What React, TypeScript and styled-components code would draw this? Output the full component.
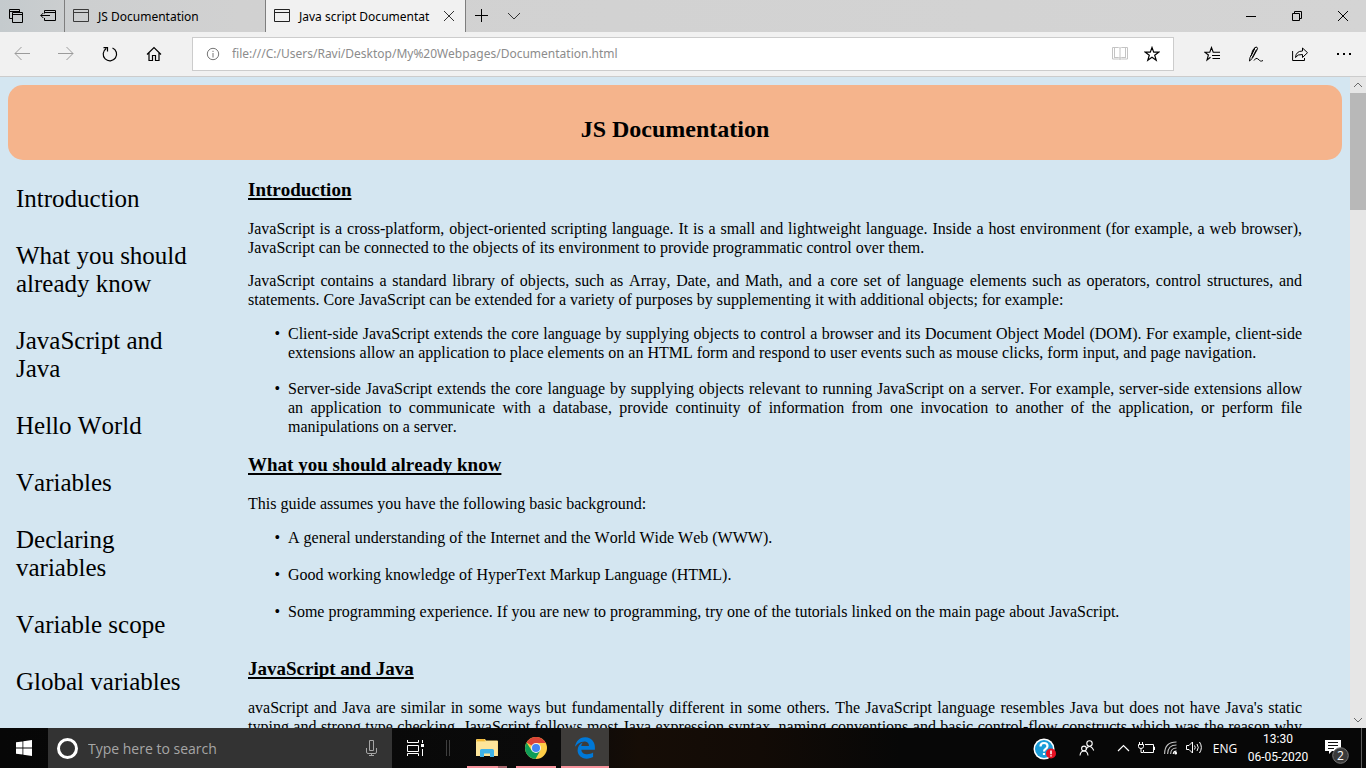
import React from "react";
import styled, { createGlobalStyle } from "styled-components";
import { FaEdgeLegacy } from "react-icons/fa";

const GlobalStyle = createGlobalStyle`
  * { box-sizing: border-box; }
  body { margin: 0; }
  button, input { font: inherit; color: inherit; border: 0; padding: 0; background: none; outline: none; }
  svg { display: block; flex: none; }
`;

const chromeFont = `"Noto Sans", "Open Sans", sans-serif`;
const taskbarFont = `"Open Sans", "Noto Sans", sans-serif`;
const serif = `"Liberation Serif", "Times New Roman", serif`;

const Desktop = styled.div`
  display: flex;
  flex-direction: column;
  height: 100vh;
  overflow: hidden;
  font-family: ${chromeFont};
  font-size: 12px;
  color: #000;
`;

/* Browser chrome */

const TitleBar = styled.header`
  display: flex;
  flex: none;
  height: 32px;
  background: linear-gradient(90deg, #c4cacd 0, #cdcfd0 80px, #d1d1d1 240px, #d4d4d4 100%);
`;

const TitleButton = styled.button<{ $width?: number }>`
  display: flex;
  align-items: center;
  justify-content: center;
  width: ${(p) => p.$width ?? 32}px;
`;

const Tab = styled.div<{ $active?: boolean }>`
  display: flex;
  align-items: center;
  width: 201px;
  padding-left: 8px;
  border-left: 1px solid #7e7e7e;
  border-right: ${(p) => (p.$active ? "1px solid #7e7e7e" : "0")};
  background: ${(p) => (p.$active ? "#f1f1f1" : "transparent")};
`;

const TabLabel = styled.button`
  flex: 1;
  min-width: 0;
  margin-left: 9px;
  white-space: nowrap;
  text-align: left;
`;

const Spacer = styled.div`
  flex: 1;
`;

const Toolbar = styled.nav`
  display: flex;
  align-items: center;
  flex: none;
  height: 45px;
  padding-bottom: 1px;
  border-bottom: 1px solid #ccc;
  background: #f1f1f1;
`;

const ToolButton = styled.button`
  display: flex;
  align-items: center;
  justify-content: center;
  width: 44px;
  height: 32px;
`;

const AddressBar = styled.div`
  display: flex;
  align-items: center;
  flex: 1;
  height: 34px;
  margin: 0 16px;
  padding-left: 13px;
  padding-right: 5px;
  border: 1px solid #ccc;
  background: #fff;
`;

const AddressInput = styled.input`
  flex: 1;
  min-width: 0;
  margin-left: 12px;
  color: #8c8c8c;
`;

const AddressButton = styled.button`
  display: flex;
  align-items: center;
  justify-content: center;
  width: 32px;
  height: 32px;
`;

/* Web page */

const Viewport = styled.div`
  display: flex;
  flex: 1;
  min-height: 0;
  background: #d4e6f1;
`;

const Page = styled.div`
  flex: 1;
  min-width: 0;
  overflow: hidden;
  padding: 8px 8px 0;
  font-family: ${serif};
  font-size: 16px;
  font-kerning: none;
`;

const Banner = styled.div`
  padding: 30px 0 17px;
  border-radius: 15px;
  background: #f5b48c;
  text-align: center;
`;

const BannerTitle = styled.h1`
  margin: 0;
  font-size: 24px;
  line-height: 28px;
`;

const Columns = styled.div`
  display: flex;
`;

const Sidebar = styled.nav`
  display: flex;
  flex-direction: column;
  flex: none;
  gap: 29px;
  width: 190px;
  margin-right: 50px;
  padding: 25px 0 0 8px;
`;

const SideLink = styled.a`
  font-size: 25px;
  line-height: 28px;
  color: #000;
  text-decoration: none;
`;

const Article = styled.main`
  flex: 1;
  min-width: 0;
  padding: 19px 40px 0 0;
  line-height: 19px;
  text-align: justify;
`;

const Section = styled.section<{ $gap: number }>`
  margin-bottom: ${(p) => p.$gap}px;
`;

const Heading = styled.h2`
  margin: 0 0 18px;
  font-size: 19px;
  line-height: 22px;
  text-align: left;
  text-decoration: underline;
  text-decoration-thickness: 2px;
  text-underline-offset: 2px;
  text-decoration-skip-ink: none;
`;

const Paragraph = styled.p<{ $fill?: boolean }>`
  margin: 0 0 14px;
  text-align-last: ${(p) => (p.$fill ? "justify" : "auto")};
`;

const List = styled.ul<{ $gap: number }>`
  display: flex;
  flex-direction: column;
  gap: ${(p) => p.$gap}px;
  margin: 15px 0 0;
  padding-left: 40px;
  list-style-type: "•\\00a0\\00a0";
`;

const ScrollBar = styled.div`
  display: flex;
  flex-direction: column;
  flex: none;
  width: 16px;
  background: #e6e6e6;
`;

const ScrollButton = styled.button`
  display: flex;
  align-items: center;
  justify-content: center;
  height: 16px;
`;

const ScrollThumb = styled.div`
  height: 117px;
  background: #b8b8b8;
`;

/* Taskbar */

const Taskbar = styled.footer`
  display: flex;
  flex: none;
  height: 40px;
  background: linear-gradient(90deg, #070707 0, #0a0a0a 560px, #160d06 640px, #120b06 760px, #070707 900px);
  font-family: ${taskbarFont};
  color: #fff;
`;

const TaskButton = styled.button<{ $width?: number }>`
  display: flex;
  align-items: center;
  justify-content: center;
  width: ${(p) => p.$width ?? 48}px;
  white-space: nowrap;
`;

const SearchBox = styled.label`
  display: flex;
  align-items: center;
  width: 344px;
  padding: 0 14px 0 8px;
  background: #333;
`;

const SearchInput = styled.input`
  flex: 1;
  min-width: 0;
  margin-left: 9px;
  font-size: 14px;
  &::placeholder { color: #a6a6a6; opacity: 1; }
`;

const Divider = styled.div`
  align-self: center;
  width: 4px;
  height: 16px;
  margin: 0 13px 0 6px;
  border: solid #3f3f3f;
  border-width: 0 1px;
`;

const AppRow = styled.div`
  display: flex;
  gap: 1px;
`;

const AppButton = styled.button<{ $active?: boolean; $split?: boolean }>`
  display: flex;
  flex-direction: column;
  align-items: center;
  justify-content: space-between;
  width: 48px;
  padding-top: 9px;
  background: ${(p) => (p.$active ? "#3e3c3a" : "transparent")};
  &::after {
    content: "";
    width: ${(p) => (p.$active ? 48 : 40)}px;
    height: 2px;
    background: ${(p) =>
      p.$split ? "linear-gradient(90deg, #f7939c 31px, #a8676d 31px)" : "#f7939c"};
  }
`;

const Clock = styled.time`
  display: flex;
  flex-direction: column;
  justify-content: center;
  width: 70px;
  padding-bottom: 1px;
  font-family: Roboto, ${taskbarFont};
  line-height: 18px;
  text-align: center;
`;

const DesktopEdge = styled.button`
  width: 5px;
  border-left: 1px solid #5c5c5c;
`;

type IconProps = {
  w: number;
  h: number;
  color?: string;
  sw?: number;
  crisp?: boolean;
  children: React.ReactNode;
};

const Icon = ({ w, h, color = "#000", sw = 1, crisp, children }: IconProps) => (
  <svg
    width={w}
    height={h}
    viewBox={`0 0 ${w} ${h}`}
    fill="none"
    stroke={color}
    strokeWidth={sw}
    shapeRendering={crisp ? "crispEdges" : undefined}
    aria-hidden="true"
  >
    {children}
  </svg>
);

const WindowIcon = ({ color }: { color: string }) => (
  <Icon w={16} h={14} color={color}>
    <path d="M.5 .5h15v12H.5zM.5 3.5h15" />
  </Icon>
);

const topics = [
  "Introduction",
  "What you should already know",
  "JavaScript and Java",
  "Hello World",
  "Variables",
  "Declaring variables",
  "Variable scope",
  "Global variables",
];

const slug = (topic: string) => "#" + topic.replace(/ /g, "_");

export default function App() {
  return (
    <Desktop>
      <GlobalStyle />
      <TitleBar>
        <TitleButton aria-label="Tabs you've set aside">
          <Icon w={14} h={14}>
            <path d="M3 9.500H.5V.5h10V3M.5 2.500h10M3.500 3.500h10v10h-10zM3.500 5.500h10" />
          </Icon>
        </TitleButton>
        <TitleButton aria-label="Set these tabs aside">
          <Icon w={16} h={12}>
            <path d="M4.500 3.500V.5h11v10h-11V8M4.500 2.500h11M.8 5.500H10M3.300 3L.8 5.500 3.300 8" />
          </Icon>
        </TitleButton>
        <Tab>
          <WindowIcon color="#3a3a3a" />
          <TabLabel>JS Documentation</TabLabel>
        </Tab>
        <Tab $active>
          <WindowIcon color="#222" />
          <TabLabel>Java script Documentat</TabLabel>
          <TitleButton aria-label="Close tab">
            <Icon w={12} h={12} color="#333">
              <path d="M1 1l10 10M11 1L1 11" />
            </Icon>
          </TitleButton>
        </Tab>
        <TitleButton aria-label="New tab">
          <Icon w={14} h={14}>
            <path d="M6.500 0v13M0 6.500h13" />
          </Icon>
        </TitleButton>
        <TitleButton aria-label="Show tab previews">
          <Icon w={14} h={8} color="#333">
            <path d="M1 1l6 6 6-6" />
          </Icon>
        </TitleButton>
        <Spacer />
        <TitleButton $width={46} aria-label="Minimize">
          <Icon w={10} h={2}>
            <path d="M0 1.500h10" />
          </Icon>
        </TitleButton>
        <TitleButton $width={46} aria-label="Restore">
          <Icon w={10} h={10}>
            <path d="M.5 2.500h7v7h-7zM2.500 2.500v-2h7v7h-2" />
          </Icon>
        </TitleButton>
        <TitleButton $width={46} aria-label="Close">
          <Icon w={10} h={10}>
            <path d="M0 0l10 10M10 0L0 10" />
          </Icon>
        </TitleButton>
      </TitleBar>

      <Toolbar>
        <ToolButton aria-label="Back">
          <Icon w={16} h={14} color="#9b9b9b">
            <path d="M1 6.500h15M7.500 0L1 6.500 7.500 13" />
          </Icon>
        </ToolButton>
        <ToolButton aria-label="Forward">
          <Icon w={16} h={14} color="#9b9b9b">
            <path d="M0 6.500h15M8.500 0L15 6.500 8.500 13" />
          </Icon>
        </ToolButton>
        <ToolButton aria-label="Refresh">
          <Icon w={16} h={16} sw={1.2}>
            <path d="M10.500 2A6.700 6.700 0 1 1 4.200 2.600M1.500 1.600h4v4" />
          </Icon>
        </ToolButton>
        <ToolButton aria-label="Home">
          <Icon w={16} h={16} sw={1.2}>
            <path d="M1 8.500L8 1.500l7 7M3 7v7.500h3.500V9.500h3v5H13V7" />
          </Icon>
        </ToolButton>
        <AddressBar>
          <Icon w={14} h={14} color="#767676">
            <circle cx="7" cy="7" r="5.700" />
            <path d="M7 6v4.500M7 3.800v1.200" />
          </Icon>
          <AddressInput
            aria-label="Address"
            defaultValue="file:///C:/Users/Ravi/Desktop/My%20Webpages/Documentation.html"
          />
          <AddressButton aria-label="Reading view">
            <Icon w={16} h={15} color="#c4c4c4">
              <path d="M.5 1.500h6q1 0 1.500.7.500-.7 1.500-.7h6v11.500h-6q-1 0-1.500.8-.5-.8-1.500-.8h-6zM2.500 1v10.500M13.500 1v10.500M8 2v11.500M2 11.500h4.500q1 0 1.500.7.500-.7 1.500-.7H14" />
            </Icon>
          </AddressButton>
          <AddressButton aria-label="Add to favorites">
            <Icon w={16} h={16} sw={1.2}>
              <path d="M8 1.500l1.700 4.700h5L10.700 9.200l1.500 5L8 11.200l-4.200 3 1.500-5L1.300 6.200h5z" />
            </Icon>
          </AddressButton>
        </AddressBar>
        <ToolButton aria-label="Hub">
          <Icon w={16} h={16} sw={1.1}>
            <path d="M6.500 11.300L3 14l1.400-5L.8 6.200h5L7.500 1.500l1.700 4.700H16M8 9.500h8M8.500 12.500H16" />
          </Icon>
        </ToolButton>
        <ToolButton aria-label="Add notes">
          <Icon w={16} h={16}>
            <path d="M1.500 15L2 11.500 6.800 2Q8 .5 9 1.300t.2 2.300L4.200 12.500 1.500 15M3.800 8L4.500 4.500 7.500 1M6.500 3L3 10M8.500 3.500L4 12M6 14.500q2-3.500 3.800-1.700t2.700 2.200 2.500-.5" />
          </Icon>
        </ToolButton>
        <ToolButton aria-label="Share">
          <Icon w={16} h={14}>
            <path d="M.6 4v9.500h11.900V11M3.500 10.500Q4 4 10.500 4V1l5 4.700-5 4.800V7.500Q5.500 7 3.500 10.500z" />
          </Icon>
        </ToolButton>
        <ToolButton aria-label="Settings and more">
          <Icon w={14} h={2} crisp>
            <path d="M0 1h2M6 1h2M12 1h2" strokeWidth="2" />
          </Icon>
        </ToolButton>
      </Toolbar>

      <Viewport>
        <Page>
          <Banner>
            <BannerTitle>JS Documentation</BannerTitle>
          </Banner>
          <Columns>
            <Sidebar>
              {topics.map((topic) => (
                <SideLink key={topic} href={slug(topic)}>
                  {topic}
                </SideLink>
              ))}
            </Sidebar>
            <Article>
              <Section $gap={18} id="Introduction">
                <Heading>Introduction</Heading>
                <Paragraph>
                  JavaScript is a cross-platform, object-oriented scripting language. It is a small
                  and lightweight language. Inside a host environment (for example, a web browser),
                  JavaScript can be connected to the objects of its environment to provide
                  programmatic control over them.
                </Paragraph>
                <Paragraph>
                  JavaScript contains a standard library of objects, such as Array, Date, and Math,
                  and a core set of language elements such as operators, control structures, and
                  statements. Core JavaScript can be extended for a variety of purposes by
                  supplementing it with additional objects; for example:
                </Paragraph>
                <List $gap={17}>
                  <li>
                    Client-side JavaScript extends the core language by supplying objects to control
                    a browser and its Document Object Model (DOM). For example, client-side
                    extensions allow an application to place elements on an HTML form and respond to
                    user events such as mouse clicks, form input, and page navigation.
                  </li>
                  <li>
                    Server-side JavaScript extends the core language by supplying objects relevant to
                    running JavaScript on a server. For example, server-side extensions allow an
                    application to communicate with a database, provide continuity of information
                    from one invocation to another of the application, or perform file manipulations
                    on a server.
                  </li>
                </List>
              </Section>
              <Section $gap={37} id="What_you_should_already_know">
                <Heading>What you should already know</Heading>
                <Paragraph>This guide assumes you have the following basic background:</Paragraph>
                <List $gap={18}>
                  <li>A general understanding of the Internet and the World Wide Web (WWW).</li>
                  <li>Good working knowledge of HyperText Markup Language (HTML).</li>
                  <li>
                    Some programming experience. If you are new to programming, try one of the
                    tutorials linked on the main page about JavaScript.
                  </li>
                </List>
              </Section>
              <Section $gap={18} id="JavaScript_and_Java">
                <Heading>JavaScript and Java</Heading>
                <Paragraph $fill>
                  avaScript and Java are similar in some ways but fundamentally different in some
                  others. The JavaScript language resembles Java but does not have Java's static
                  typing and strong type checking. JavaScript follows most Java expression syntax,
                  naming conventions and basic control-flow constructs which was the reason why
                </Paragraph>
              </Section>
            </Article>
          </Columns>
        </Page>
        <ScrollBar>
          <ScrollButton aria-label="Scroll up">
            <Icon w={10} h={6} color="#6a6a6a">
              <path d="M1 5l4-4 4 4" />
            </Icon>
          </ScrollButton>
          <ScrollThumb />
          <Spacer />
          <ScrollButton aria-label="Scroll down">
            <Icon w={10} h={6} color="#6a6a6a">
              <path d="M1 1l4 4 4-4" />
            </Icon>
          </ScrollButton>
        </ScrollBar>
      </Viewport>

      <Taskbar>
        <TaskButton aria-label="Start">
          <svg width="16" height="16" viewBox="0 0 16 16" fill="#fff" aria-hidden="true">
            <path d="M0 2.300L6.500 1.400v6.200H0zM7.300 1.300L16 0v7.600H7.300zM0 8.400h6.500v6.200L0 13.700zM7.300 8.400H16V16l-8.700-1.300z" />
          </svg>
        </TaskButton>
        <SearchBox>
          <Icon w={23} h={23} color="#fff" sw={3}>
            <circle cx="11.500" cy="11.500" r="9" />
          </Icon>
          <SearchInput type="text" placeholder="Type here to search" aria-label="Search" />
          <Icon w={13} h={16} color="#a6a6a6">
            <path d="M4.500.5h4v10h-4zM1.500 8v4q0 1.500 1.500 1.500h7q1.500 0 1.500-1.500V8M6.500 13.500v2M4 15.500h5" />
          </Icon>
        </SearchBox>
        <TaskButton aria-label="Task view">
          <Icon w={18} h={16} color="#fff">
            <path d="M.5 0v2.500h11V0M.5 5.500h11v6H.5zM.5 16v-2.500h11V16M15.500 0v3M15.500 9v7" />
            <path d="M14 4h3v3h-3z" fill="#fff" stroke="none" />
          </Icon>
        </TaskButton>
        <Divider />
        <AppRow>
          <AppButton $split aria-label="File Explorer">
            <svg width="22" height="20" viewBox="0 0 22 20" aria-hidden="true">
              <path d="M0 4V3q0-1 1-1h8l1 1.500h11q1 0 1 1V19H0z" fill="#f8d775" />
              <path d="M1 4V2.500L8 2l1 2z" fill="#f2b632" />
              <path d="M0 5h9l1-1h11.500V19H0z" fill="#fde59a" />
              <path d="M4 20v-6.500Q4 12 5.500 12h11q1.500 0 1.500 1.500V20h-4v-3.500H8V20z" fill="#3fb3e8" />
            </svg>
          </AppButton>
          <AppButton aria-label="Google Chrome">
            <svg width="22" height="22" viewBox="0 0 22 22" aria-hidden="true">
              <circle cx="11" cy="11" r="11" fill="#ffcd46" />
              <path d="M11 11L1.500 5.500A11 11 0 0 1 20.500 5.500L20.700 6H11z" fill="#db4437" />
              <path d="M1.500 5.500A11 11 0 0 0 10.500 22L15.300 13.500 6.700 13.500z" fill="#0f9d58" />
              <circle cx="11" cy="11" r="5" fill="#f1f1f1" />
              <circle cx="11" cy="11" r="4" fill="#4285f4" />
            </svg>
          </AppButton>
          <AppButton $active aria-label="Microsoft Edge">
            <FaEdgeLegacy size={22} color="#0078d7" />
          </AppButton>
        </AppRow>
        <Spacer />
        <TaskButton $width={38} aria-label="Support assistant">
          <svg width="24" height="24" viewBox="0 0 24 24" aria-hidden="true">
            <circle cx="12" cy="13" r="10.500" fill="#fff" />
            <circle cx="12" cy="13" r="9" fill="#1a9cd8" />
            <path d="M8.500 10.500Q8.500 7 12 7t3.500 3q0 1.700-1.800 2.900Q12 14 12 15.500M12 17v2" fill="none" stroke="#fff" strokeWidth="2.200" />
            <circle cx="19" cy="17.500" r="5" fill="#e81123" />
            <path d="M19 14.500v3.800M19 19.300v1.200" stroke="#fff" strokeWidth="1.500" />
          </svg>
        </TaskButton>
        <TaskButton aria-label="People">
          <Icon w={16} h={16} color="#fff" sw={1.1}>
            <circle cx="10.500" cy="3.500" r="2.700" />
            <path d="M7 9.500Q8 6.500 10.500 6.500t4.200 4" />
            <circle cx="5" cy="8.500" r="2.400" />
            <path d="M1 15.500Q1.500 11 5 11t4 4.500" />
          </Icon>
        </TaskButton>
        <TaskButton $width={24} aria-label="Show hidden icons">
          <Icon w={13} h={8} color="#fff" sw={1.2}>
            <path d="M1 7l5.500-5.500L12 7" />
          </Icon>
        </TaskButton>
        <TaskButton $width={24} aria-label="Battery">
          <Icon w={18} h={12} color="#fff">
            <path d="M7 2.500h8.500v8H5.500V8M15.500 5h1v3M1.500 0v2.500M4.500 0v2.500M.5 2.500h5v2q0 2-2.500 2t-2.500-2zM3 6.500v4h2" />
          </Icon>
        </TaskButton>
        <TaskButton $width={24} aria-label="Wi-Fi">
          <Icon w={14} h={14} color="#fff" sw={1.1}>
            <path d="M.6 13Q.6 1 12.500 1M3.600 13Q3.800 4 12.500 4M6.600 13Q6.800 7 12.500 7" stroke="#c4c4c4" />
            <path d="M9.200 13Q9.500 10 12.500 10" />
            <circle cx="11.700" cy="12.200" r=".8" fill="#fff" />
          </Icon>
        </TaskButton>
        <TaskButton $width={24} aria-label="Volume">
          <Icon w={18} h={14} color="#fff">
            <path d="M.5 4.500h2.500l3.500-3.500v11L3 8.500H.5zM8.500 4.500q1.500 2 0 4M11 3q2.500 3.500 0 7M13.500 1q3.700 5.500 0 11" />
          </Icon>
        </TaskButton>
        <TaskButton $width={36}>ENG</TaskButton>
        <Clock dateTime="2020-05-06T13:30">
          <span>13:30</span>
          <span>06-05-2020</span>
        </Clock>
        <TaskButton aria-label="2 new notifications">
          <svg width="24" height="32" viewBox="0 0 24 32" aria-hidden="true">
            <path d="M0 8h16v11H7l-3 3v-3H0z" fill="#fff" />
            <path d="M3 10.500h10M3 13.500h10M3 16.500h6" stroke="#111" />
            <circle cx="15.500" cy="23.500" r="7.800" fill="#3a3a3a" stroke="#777" />
            <text x="15.500" y="28" fill="#fff" fontSize="12" textAnchor="middle">
              2
            </text>
          </svg>
        </TaskButton>
        <DesktopEdge aria-label="Show desktop" />
      </Taskbar>
    </Desktop>
  );
}
